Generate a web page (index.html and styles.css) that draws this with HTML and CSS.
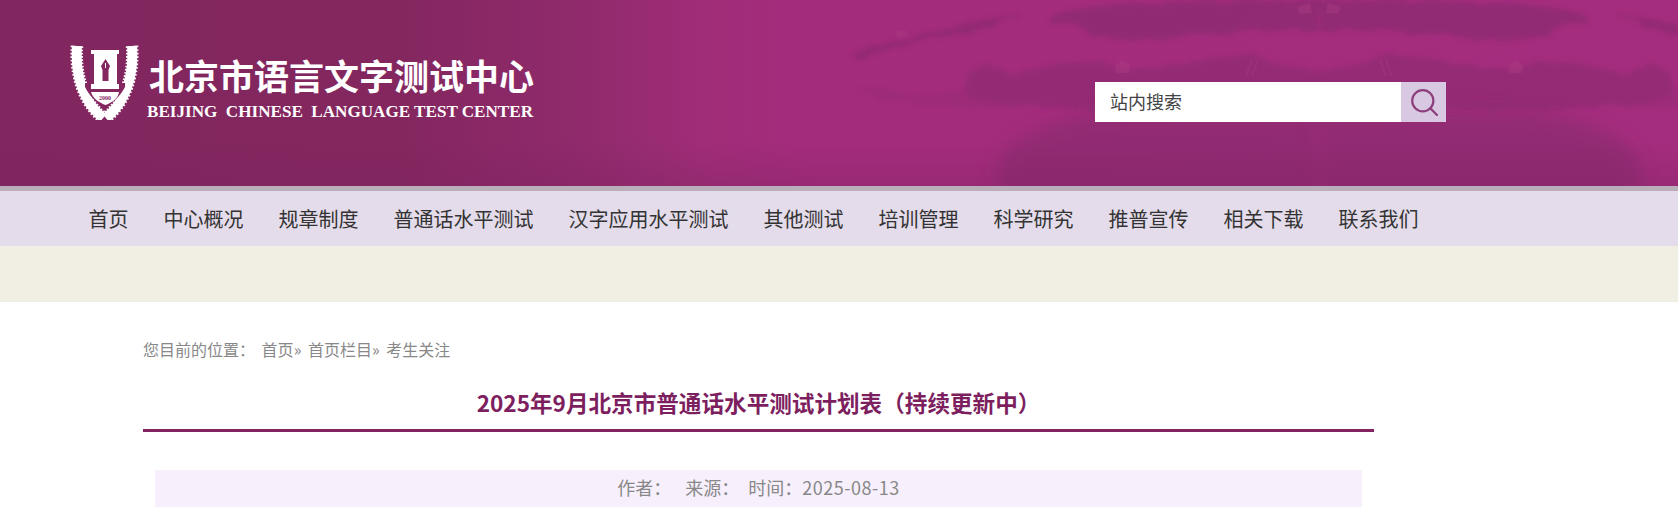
FILE: index.html
```html
<!DOCTYPE html>
<html lang="zh-CN">
<head>
    <meta charset="UTF-8">
    <meta name="viewport" content="width=device-width, initial-scale=1.0">
    <title>2025年9月北京市普通话水平测试计划表（持续更新中）</title>
    <link rel="stylesheet" href="styles.css">
</head>
<body>
    <div class="header">
        <!-- 背景山水 -->
        <svg class="header-bg" width="1678" height="186" viewBox="0 0 1678 186" aria-hidden="true">
            <defs>
                <filter id="rough" x="-5%" y="-20%" width="110%" height="140%">
                    <feTurbulence type="fractalNoise" baseFrequency="0.05 0.12" numOctaves="3" seed="4" result="n"/>
                    <feDisplacementMap in="SourceGraphic" in2="n" scale="10" xChannelSelector="R" yChannelSelector="G"/>
                    <feGaussianBlur stdDeviation="2.6"/>
                </filter>
                <filter id="soft" x="-10%" y="-30%" width="120%" height="160%">
                    <feGaussianBlur stdDeviation="9"/>
                </filter>
                <linearGradient id="bottomShade" x1="0" x2="0" y1="0" y2="1">
                    <stop offset="0" stop-color="#7a2260" stop-opacity="0"/>
                    <stop offset="1" stop-color="#7a2260" stop-opacity="0.3"/>
                </linearGradient>
                <g id="hills">
                    <!-- 上方深色带 -->
                    <path filter="url(#rough)" fill="#862a6e" opacity="0.62" d="M1050 14 C1090 4 1180 2 1240 0 L1319 0 L1319 30 C1290 30 1240 30 1200 36 C1160 42 1110 42 1088 34 C1086 26 1064 24 1050 22 Z"/>
                    <path filter="url(#rough)" fill="#7e2768" opacity="0.45" d="M852 54 C885 42 925 34 950 27 C970 24 1000 20 1018 12 L1020 16 C990 28 960 36 930 38 C900 44 880 52 858 60 Z"/>
                    <!-- 中间山脊 -->
                    <path filter="url(#rough)" fill="#882a6e" opacity="0.55" d="M968 72 L980 66 L990 62 L1004 70 L1012 74 L1044 68 L1078 60 L1110 64 L1124 70 L1170 66 L1210 58 L1250 53 L1276 64 L1319 70 L1319 112 L1240 110 L1100 110 L990 104 L965 92 Z"/>
                    <path filter="url(#rough)" fill="#882a6e" opacity="0.28" d="M858 88 L880 88 L920 96 L970 92 L1000 108 L940 106 L880 100 Z"/>
                    <!-- 下方水面 -->
                    <path filter="url(#soft)" fill="#852a6c" opacity="0.6" d="M1000 158 C1014 134 1060 116 1120 112 L1319 110 L1319 196 L996 196 Z"/>
                    <!-- 亮色小块 -->
                    <path fill="#a7397f" opacity="0.5" d="M1115 66 L1122 60 L1130 65 L1129 73 L1116 73 Z"/>
                    <path fill="#a7397f" opacity="0.45" d="M896 31 L906 30 L908 37 L897 38 Z"/>
                    <path fill="#a7397f" opacity="0.5" d="M1297 7 L1310 3 L1312 13 L1300 14 Z"/>
                    <path fill="none" stroke="#a7397f" stroke-width="2" opacity="0.4" d="M1252 60 L1246 76 M1258 60 L1252 76"/>
                </g>
            </defs>
            <use href="#hills"/>
            <use href="#hills" transform="translate(2638 0) scale(-1 1)"/>
            <rect x="0" y="140" width="1678" height="46" fill="url(#bottomShade)"/>
        </svg>

        <a class="logo" href="#">
            <svg class="emblem" width="74" height="80" viewBox="7 3 74 80" aria-hidden="true">
                <g fill="none" stroke="#fff">
                    <path stroke-width="10" d="M16 9 C14 38 22 64 42 81"/>
                    <path stroke-width="12.5" stroke-dasharray="1.6 1.8" d="M16 9 C14 38 22 64 42 81"/>
                    <path stroke-width="10" d="M71 9 C73 38 65 64 45 81"/>
                    <path stroke-width="12.5" stroke-dasharray="1.6 1.8" d="M71 9 C73 38 65 64 45 81"/>
                </g>
                <path fill="#84265f" d="M24 50 C28 58 35 66 43 70 L45 70 C52 66 60 58 64 50 L64 46 H24 Z"/>
                <path fill="#fff" d="M30 13 H58 V17 H56 V47 H58 V52 H30 V47 H33 V17 H30 Z"/>
                <path fill="#84265f" d="M44.5 22 L49 29 L47.5 33 V44 H41.5 V33 L40 29 Z"/>
                <path fill="#fff" d="M44 26 H45 V31 H44 Z"/>
                <path fill="#fff" d="M30 55 H58 C57 62 50 66 44.5 68 C39 66 32 62 30 55 Z"/>
                <text class="emblem-year" x="44" y="62.5">2000</text>
            </svg>
            <div class="logo-text">
                <div class="logo-cn">北京市语言文字测试中心</div>
                <div class="logo-en">BEIJING&nbsp; CHINESE&nbsp; LANGUAGE TEST CENTER</div>
            </div>
        </a>

        <form class="search">
            <input class="search-input" type="text" placeholder="站内搜索">
            <button class="search-btn" type="button" aria-label="搜索">
                <svg width="28" height="28" viewBox="0 0 28 28" fill="none" stroke="#8c3f7c" stroke-width="2.2">
                    <circle cx="12.8" cy="12.8" r="10.6"/>
                    <path d="M20.4 20.4 L27 27" stroke-linecap="round"/>
                </svg>
            </button>
        </form>
    </div>

    <div class="nav">
        <a href="#">首页</a>
        <a href="#">中心概况</a>
        <a href="#">规章制度</a>
        <a href="#">普通话水平测试</a>
        <a href="#">汉字应用水平测试</a>
        <a href="#">其他测试</a>
        <a href="#">培训管理</a>
        <a href="#">科学研究</a>
        <a href="#">推普宣传</a>
        <a href="#">相关下载</a>
        <a href="#">联系我们</a>
    </div>

    <div class="sub-band"></div>

    <div class="content">
        <div class="crumbs">
            <span>您目前的位置：</span>
            <a href="#">首页</a>» <a href="#">首页栏目</a>» <a href="#">考生关注</a>
        </div>
        <h1 class="article-title">2025年9月北京市普通话水平测试计划表（持续更新中）</h1>
        <div class="article-meta">
            <span class="meta-author">作者：</span>　来源：　时间：<span class="meta-date">2025-08-13</span>
        </div>
    </div>
</body>
</html>
```

FILE: styles.css
```css
* {
    margin: 0;
    padding: 0;
    box-sizing: border-box;
}

body {
    font-family: "Noto Sans CJK SC", "Noto Sans", sans-serif;
    background: #fff;
    height: 512px;
    overflow: hidden;
}

a {
    color: inherit;
    text-decoration: none;
}

/* 顶部 */
.header {
    position: relative;
    height: 191px;
    padding: 40px 232px 0 68px;
    display: flex;
    justify-content: space-between;
    align-items: flex-start;
    background: linear-gradient(90deg, #81265f 0%, #84275f 24%, #8f2a6b 34%, #a02d78 42%, #a42c7d 48%, #a52d7f 100%);
    border-bottom: 5px solid #b9aeb9;
}

.header-bg {
    position: absolute;
    left: 0;
    top: 0;
}

.logo {
    position: relative;
    display: flex;
    align-items: flex-start;
    color: #fff;
}

.emblem {
    display: block;
    flex: none;
}

.emblem-year {
    font-family: "Liberation Serif", serif;
    font-size: 6px;
    font-weight: 700;
    text-anchor: middle;
    fill: #84265f;
}

.logo-text {
    margin-left: 5px;
    width: 392px;
}

.logo-cn {
    margin: 14px 0 0 2px;
    font-size: 35px;
    line-height: 42px;
    font-weight: 700;
    white-space: nowrap;
}

.logo-en {
    margin-top: 7px;
    font-family: "Liberation Serif", serif;
    font-size: 17.1px;
    line-height: 18px;
    font-weight: 700;
    white-space: nowrap;
}

.search {
    position: relative;
    display: flex;
    width: 351px;
    height: 40px;
    margin-top: 42px;
}

.search-input {
    flex: 1;
    min-width: 0;
    border: none;
    outline: none;
    padding: 0 15px 2px;
    font-family: inherit;
    font-size: 18px;
    color: #444;
    background: #fff;
}

.search-input::placeholder {
    color: #444;
    opacity: 1;
}

.search-btn {
    width: 45px;
    border: none;
    background: #d8c8e2;
    display: flex;
    align-items: center;
    justify-content: center;
}

/* 导航 */
.nav {
    height: 55px;
    padding-left: 71px;
    display: flex;
    align-items: center;
    background: #e4dcea;
}

.nav a {
    padding: 0 17.5px;
    font-size: 20px;
    line-height: 55px;
    color: #333;
    white-space: nowrap;
}

.sub-band {
    height: 56px;
    background: #f1eee3;
}

/* 正文 */
.content {
    width: 1231px;
    margin-left: 143px;
}

.crumbs {
    margin-top: 35px;
    font-size: 16px;
    line-height: 24px;
    color: #888;
    word-spacing: 3px;
}

.article-title {
    margin-top: 18px;
    height: 53px;
    font-size: 22.6px;
    line-height: 48px;
    font-weight: 700;
    text-align: center;
    color: #7d1f5f;
    border-bottom: 3px solid #83235f;
}

.article-meta {
    margin: 38px 12px 0;
    height: 37px;
    font-size: 18px;
    line-height: 35px;
    text-align: center;
    color: #888;
    background: #f7f0fc;
}

.meta-author {
    margin-right: 5px;
}

.meta-date {
    letter-spacing: 0.5px;
}
```
